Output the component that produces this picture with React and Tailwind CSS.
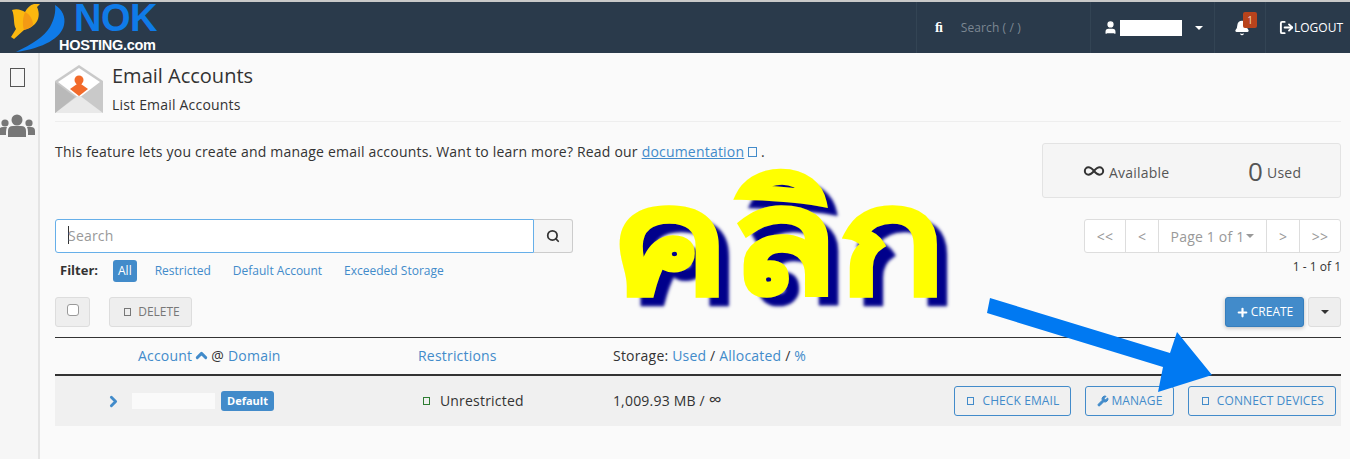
import React from "react";
import { Search, User, Bell, LogOut, Plus, Wrench, ChevronUp, ChevronRight, Infinity as InfinityIcon } from "lucide-react";

// missing icon font glyphs show up as little empty boxes in the page
const Tofu = ({ className = "" }) => (
  <span className={`inline-block w-[7px] h-[8px] border border-current ${className}`} />
);

const Logo = () => (
  <div className="relative w-[160px] h-[51px] shrink-0">
    <svg width="70" height="51" viewBox="0 0 70 51" className="absolute left-0 top-0">
      <path d="M55 3 C62 7 66 15 64 23 C61 36 44 46 16 50 C32 42 44 35 50 25 C54 18 56 10 55 3 Z" fill="#0f7be8" />
      <path d="M12 8 C17 6 22 8 25 10 C27 6 30 3 34 2 C36 2 38 2 40 2 L37 5 C40 11 39 18 35 22 C31 26 27 27 24 28 L14 37 L11 35 L16 27 C13 22 15 15 12 8 Z" fill="#fbb80f" />
      <path d="M25 10 C30 12 33 18 33 23 C30 26 27 27 24 28 C22 22 23 15 25 10 Z" fill="#f39a14" />
    </svg>
    <span className="absolute left-[74px] top-[-2px] font-['Liberation_Sans',sans-serif] font-bold text-[38px] leading-[36px] tracking-[-0.5px] text-[#0f7be8]">NOK</span>
    <span className="absolute left-[59px] top-[36px] font-['Liberation_Sans',sans-serif] font-bold text-[14.5px] leading-[14px] tracking-[-0.3px] text-white">HOSTING.com</span>
  </div>
);

const Header = () => (
  <header className="h-[53px] flex bg-[#2a3a4b] border-t-2 border-[#c9c9c9] text-white">
    <Logo />
    <div className="flex-1" />
    <div className="w-[174px] flex items-center border-l border-[#334454] pl-[18px]">
      <span className="font-bold text-[14px] font-['Liberation_Serif',serif]">ﬁ</span>
      <span className="ml-[18px] text-[12px] tracking-[0.1px] text-[#7c8792]">Search ( / )</span>
    </div>
    <div className="w-[124px] flex items-center border-l border-[#334454] pl-[12px]">
      <User size={15} fill="white" strokeWidth={2} />
      <span className="ml-[2px] w-[62px] h-[16px] bg-white" />
      <span className="ml-[13px] mt-[1px] border-x-[4px] border-t-[4px] border-x-transparent border-t-white" />
    </div>
    <div className="w-[51px] flex items-center border-l border-[#334454] pl-[19px] relative">
      <Bell size={16} fill="white" />
      <span className="absolute left-[28px] top-[10px] w-[14px] h-[16px] rounded-[2px] bg-[#b8431c] text-[10px] leading-[16px] text-center text-[#f3d6c8]">1</span>
    </div>
    <div className="w-[85px] flex items-center border-l border-[#334454] pl-[13px]">
      <LogOut size={15} strokeWidth={3} />
      <span className="text-[12px]">LOGOUT</span>
    </div>
  </header>
);

const Sidebar = () => (
  <aside className="w-[40px] shrink-0 bg-[#f6f6f6] border-r-2 border-[#e4e4e4] flex flex-col items-center pt-[15px] pr-[4px]">
    <span className="w-[15px] h-[19px] border border-[#555]" />
    <svg width="36" height="24" viewBox="0 0 36 24" className="mt-[27px]" fill="#777">
      <circle cx="18" cy="6" r="5.5" />
      <circle cx="6" cy="9" r="3.6" />
      <circle cx="30" cy="9" r="3.6" />
      <path d="M9 23 V17 Q9 12 14 12 H22 Q27 12 27 17 V23 Z" />
      <path d="M0 21 V17 Q0 13 4 13 H8 Q7 15 7 18 V21 Z" />
      <path d="M36 21 V17 Q36 13 32 13 H28 Q29 15 29 18 V21 Z" />
    </svg>
  </aside>
);

const EnvelopeIcon = () => (
  <svg width="48" height="48" viewBox="0 0 48 48" className="shrink-0">
    <path d="M0 16 L24 0 L48 16 V48 H0 Z" fill="#c9c9c9" />
    <path d="M3 17 L24 3 L45 17 L24 33 Z" fill="#fff" />
    <path d="M0 48 L24 30 L48 48 Z" fill="#e9e9e9" />
    <path d="M0 17 L20 32 L0 48 Z" fill="#b9b9b9" />
    <circle cx="24" cy="15" r="4.5" fill="#f26a2a" />
    <path d="M22 19 H26 L33 24 L24 31 L15 24 Z" fill="#f26a2a" />
  </svg>
);

const Pager = () => (
  <div className="flex h-[34px] text-[14px] tracking-[0.2px] text-[#999] bg-white border border-[#ddd] rounded-[3px] divide-x divide-[#ddd]">
    <span className="w-[41px] flex items-center justify-center">&lt;&lt;</span>
    <span className="w-[33px] flex items-center justify-center">&lt;</span>
    <span className="w-[108px] flex items-center justify-center">
      Page 1 of 1
      <span className="ml-[2px] border-x-[4px] border-t-[4px] border-x-transparent border-t-[#999]" />
    </span>
    <span className="w-[33px] flex items-center justify-center">&gt;</span>
    <span className="w-[40px] flex items-center justify-center">&gt;&gt;</span>
  </div>
);

const OutlineButton = ({ children, className = "" }) => (
  <button className={`h-[30px] flex items-center justify-center text-[12px] tracking-[0.1px] text-[#428bca] border border-[#428bca] rounded-[3px] ${className}`}>
    {children}
  </button>
);

const Overlay = () => (
  <>
    <div className="absolute left-[610px] top-[170px] origin-left scale-x-[1.19] text-[150px] leading-[130px] font-bold font-['Noto_Sans','Liberation_Sans',sans-serif] text-[#ffff00] [-webkit-text-stroke:3px_#ffff00] [text-shadow:10px_10px_3px_#00008b] whitespace-nowrap">
      คลิก
    </div>
    <svg width="1350" height="459" className="absolute left-0 top-0 pointer-events-none">
      <polygon points="990,298 1170,353 1177,332 1212,375 1158,392 1163,367 987,313" fill="#0079f2" />
    </svg>
  </>
);

export default function App() {
  return (
    <div className="relative w-[1350px] h-[459px] overflow-hidden bg-[#fafafa] font-['Open_Sans',sans-serif] text-[#333]">
      <Header />
      <div className="flex h-[406px]">
        <Sidebar />
        <main className="flex-1 pl-[15px] pr-[9px]">
          <div className="flex gap-[9px] pt-[12px] pb-[9px] h-[69px] border-b border-[#eee]">
            <EnvelopeIcon />
            <div>
              <h1 className="text-[20px] leading-[24px] mt-[-1px]">Email Accounts</h1>
              <p className="text-[14px] tracking-[0.2px] leading-[20px] mt-[7px]">List Email Accounts</p>
            </div>
          </div>

          <div className="flex justify-between">
            <div className="w-[518px]">
              <p className="mt-[20px] text-[14px] tracking-[0.2px] leading-[20px] whitespace-nowrap">
                This feature lets you create and manage email accounts. Want to learn more? Read our{" "}
                <a className="text-[#428bca] underline">documentation</a>{" "}
                <Tofu className="text-[#428bca] w-[9px] h-[10px]" /> .
              </p>
              <div className="flex mt-[57px] h-[34px]">
                <div className="w-[479px] bg-white border border-[#66afe9] rounded-l-[3px] flex items-center pl-[12px] pb-[2px] text-[14px] tracking-[0.2px] text-[#999]">
                  <span className="w-px h-[18px] bg-[#333]" />
                  <span className="ml-[-1px]">Search</span>
                </div>
                <button className="w-[39px] flex items-center justify-center bg-[#f5f5f5] border border-l-0 border-[#ccc] rounded-r-[3px]">
                  <Search size={14} strokeWidth={3} />
                </button>
              </div>
              <div className="flex items-center mt-[7px] h-[22px] text-[12px] text-[#428bca]">
                <span className="ml-[5px] font-bold text-[13px] text-[#333]">Filter:</span>
                <span className="ml-[15px] px-[5px] h-[22px] leading-[22px] rounded-[3px] bg-[#428bca] text-white">All</span>
                <span className="ml-[18px]">Restricted</span>
                <span className="ml-[22px]">Default Account</span>
                <span className="ml-[22px]">Exceeded Storage</span>
              </div>
            </div>
            <div className="w-[299px] flex flex-col items-end">
              <div className="mt-[21px] w-[299px] h-[55px] flex items-center bg-[#f5f5f5] border border-[#e3e3e3] rounded-[3px] text-[14px] tracking-[0.2px] text-[#555]">
                <span className="ml-[40px] flex items-center w-[165px]">
                  <InfinityIcon size={22} strokeWidth={2.2} className="text-[#333]" />
                  <span className="ml-[4px] mt-[4px]">Available</span>
                </span>
                <span className="text-[26px] leading-[24px]">0</span>
                <span className="ml-[4px] mt-[4px]">Used</span>
              </div>
              <div className="mt-[21px]"><Pager /></div>
              <p className="mt-[5px] text-[12px] leading-[17px]">1 - 1 of 1</p>
            </div>
          </div>

          <div className="flex items-center justify-between mt-[15px] h-[30px]">
            <div className="flex gap-[19px]">
              <span className="w-[35px] h-[30px] flex justify-center pt-[6px] bg-[#eee] border border-[#ddd] rounded-[3px]">
                <span className="w-[12px] h-[12px] rounded-[3px] bg-white border border-[#999]" />
              </span>
              <button className="w-[83px] h-[30px] flex items-center justify-center gap-[7px] pl-[3px] text-[12px] text-[#777] bg-[#eee] border border-[#ddd] rounded-[3px]">
                <Tofu /> DELETE
              </button>
            </div>
            <div className="flex gap-[4px]">
              <button className="w-[79px] h-[30px] flex items-center justify-center gap-[2px] text-[12px] text-white bg-[#428bca] border border-[#357ebd] rounded-[3px] shadow-[0_1px_4px_rgba(0,0,0,0.25)]">
                <Plus size={13} strokeWidth={4} /> CREATE
              </button>
              <button className="w-[33px] h-[30px] flex items-center justify-center bg-[#eee] border border-[#ddd] rounded-[3px]">
                <span className="border-x-[4px] border-t-[4px] border-x-transparent border-t-[#333]" />
              </button>
            </div>
          </div>

          <div className="mt-[10px] h-[39px] pb-[2px] flex items-center border-t border-[#333] border-b-2 text-[14px] tracking-[0.2px]">
            <span className="ml-[83px] w-[280px] flex items-center text-[#428bca]">
              Account
              <ChevronUp size={17} strokeWidth={4} className="mx-[1px]" />
              <span className="text-[#333]">@</span>
              <span className="ml-[4px]">Domain</span>
            </span>
            <span className="w-[195px] text-[#428bca]">Restrictions</span>
            <span>
              Storage: <span className="text-[#428bca]">Used</span> / <span className="text-[#428bca]">Allocated</span> / <span className="text-[#428bca]">%</span>
            </span>
          </div>
          <div className="h-[50px] flex items-center bg-[#f0f0f0] text-[14px] tracking-[0.2px]">
            <ChevronRight size={17} strokeWidth={4} className="ml-[50px] text-[#428bca]" />
            <span className="ml-[10px] w-[83px] h-[16px] bg-[#fafafa]" />
            <span className="ml-[6px] px-[6px] h-[20px] leading-[20px] rounded-[3px] bg-[#428bca] text-white text-[11px] tracking-normal font-bold">Default</span>
            <span className="ml-[149px] w-[190px] flex items-center">
              <Tofu className="text-[#2e7d32]" />
              <span className="ml-[10px] mt-[-2px]">Unrestricted</span>
            </span>
            <span className="w-[341px] mt-[-1px]">1,009.93 MB / <span className="text-[18px] leading-none">∞</span></span>
            <OutlineButton className="w-[117px] gap-[8px] pl-[2px]"><Tofu /> CHECK EMAIL</OutlineButton>
            <OutlineButton className="ml-[14px] w-[89px] gap-[2px] pl-[1px]"><Wrench size={12} fill="#428bca" /> MANAGE</OutlineButton>
            <OutlineButton className="ml-[14px] w-[148px] gap-[8px] pl-[2px]"><Tofu /> CONNECT DEVICES</OutlineButton>
            <span className="w-[5px]" />
          </div>
        </main>
      </div>
      <Overlay />
    </div>
  );
}
